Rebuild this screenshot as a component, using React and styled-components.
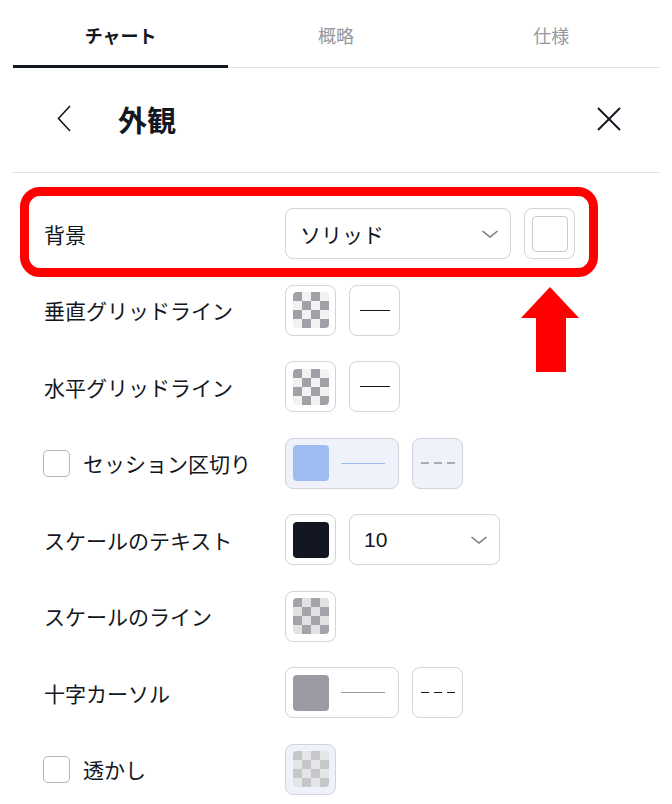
import React from "react";
import styled, { createGlobalStyle, css } from "styled-components";

const GlobalStyle = createGlobalStyle`
  html, body { margin: 0; padding: 0; background: #ffffff; }
  body {
    font-family: "Liberation Sans", "Noto Sans CJK JP", sans-serif;
    color: #131722;
  }
  * { box-sizing: border-box; }
`;

const Page = styled.div`
  position: relative;
  width: 672px;
  height: 804px;
  padding: 0 13px;
  overflow: hidden;
`;

const TabBar = styled.div`
  display: grid;
  grid-template-columns: repeat(3, 1fr);
  height: 68px;
  border-bottom: 1px solid #e0e3eb;
`;

const Tab = styled.div`
  display: flex;
  align-items: center;
  justify-content: center;
  height: 68px;
  margin-bottom: -1px;
  padding-top: 5px;
  font-size: 18px;
  font-weight: ${(p) => (p.$active ? 600 : 400)};
  color: ${(p) => (p.$active ? "#131722" : "#9598a1")};
  border-bottom: 3px solid ${(p) => (p.$active ? "#131722" : "transparent")};
`;

const Header = styled.div`
  display: flex;
  align-items: center;
  height: 105px;
  padding: 0 38px 3px 44px;
  border-bottom: 1px solid #e0e3eb;
`;

const Title = styled.h1`
  margin: 0 0 0 47px;
  flex: 1;
  font-size: 29px;
  font-weight: 700;
  color: #131722;
`;

const IconButton = styled.div`
  display: flex;
  align-items: center;
  justify-content: center;
  color: #131722;
`;

const Body = styled.div`
  display: flex;
  flex-direction: column;
  gap: 25.5px;
  padding-top: 35px;
`;

const Row = styled.div`
  display: grid;
  grid-template-columns: 272px 1fr;
  align-items: center;
  height: 51px;
`;

const Label = styled.div`
  display: flex;
  align-items: center;
  gap: 13px;
  padding-left: 31px;
  font-size: 21px;
  color: #131722;
  white-space: nowrap;
`;

const Checkbox = styled.span`
  width: 27px;
  height: 27px;
  border: 1.5px solid #b2b5be;
  border-radius: 5px;
  background: #fff;
  margin-left: -1px;
`;

const Controls = styled.div`
  display: flex;
  align-items: center;
  gap: 13px;
`;

const Box = styled.div`
  display: flex;
  align-items: center;
  justify-content: ${(p) => (p.$wide ? "flex-start" : "center")};
  gap: 12px;
  width: ${(p) => p.$w || 51}px;
  height: 51px;
  padding: ${(p) => (p.$wide ? "0 13px 0 7px" : "0")};
  border: 1.5px solid #d1d4dc;
  border-radius: 8px;
  background: ${(p) => (p.$disabled ? "#eff2fa" : "#ffffff")};
`;

const patterns = {
  dark: ["#a0a1a6", "#f2f2f3"],
  mid: ["#a3a4a9", "#e0e1e3"],
  faint: ["#c6c7cb", "#e4e5e8"],
};

const Swatch = styled.span`
  flex: none;
  width: 36px;
  height: 36px;
  border-radius: 4px;
  ${(p) =>
    p.$pattern
      ? css`
          background-image: conic-gradient(
            ${patterns[p.$pattern][1]} 25%,
            ${patterns[p.$pattern][0]} 0 50%,
            ${patterns[p.$pattern][1]} 0 75%,
            ${patterns[p.$pattern][0]} 0
          );
          background-size: 18px 18px;
        `
      : css`
          background: ${p.$color};
        `}
  ${(p) =>
    p.$outlined &&
    css`
      background: #ffffff;
      border: 1.5px solid #c9ccd4;
    `}
`;

const Line = styled.span`
  display: block;
  width: ${(p) => p.$w || 30}px;
  height: 0;
  border-top: ${(p) => p.$t || 1.5}px solid ${(p) => p.$color || "#131722"};
`;

const Dashes = styled.span`
  display: flex;
  gap: 5px;
  & > span {
    width: 8px;
    height: 1.5px;
    background: ${(p) => p.$color};
  }
`;

const Select = styled.div`
  display: flex;
  align-items: center;
  justify-content: space-between;
  width: ${(p) => p.$w}px;
  height: 51px;
  padding: 0 11px 0 14px;
  border: 1.5px solid #d1d4dc;
  border-radius: 8px;
  font-size: 21px;
  color: #131722;
`;

const Highlight = styled.div`
  position: absolute;
  left: 20px;
  top: 187px;
  width: 578px;
  height: 90px;
  border: 9px solid #ff0000;
  border-radius: 20px;
  pointer-events: none;
`;

const Arrow = styled.svg`
  position: absolute;
  left: 521px;
  top: 287px;
`;

const Chevron = () => (
  <svg width="18" height="8" viewBox="0 0 18 8">
    <polyline points="1.5,1 9,7 16.5,1" fill="none" stroke="#787b86" strokeWidth="1.6" />
  </svg>
);

const DashBox = ({ disabled, color }) => (
  <Box $disabled={disabled}>
    <Dashes $color={color}>
      <span />
      <span />
      <span />
    </Dashes>
  </Box>
);

export default function App() {
  return (
    <>
      <GlobalStyle />
      <Page>
        <TabBar>
          <Tab $active>チャート</Tab>
          <Tab>概略</Tab>
          <Tab>仕様</Tab>
        </TabBar>

        <Header>
          <IconButton>
            <svg width="14" height="27" viewBox="0 0 14 27">
              <polyline points="13,1 1.5,13.5 13,26" fill="none" stroke="#131722" strokeWidth="1.6" />
            </svg>
          </IconButton>
          <Title>外観</Title>
          <IconButton>
            <svg width="24" height="24" viewBox="0 0 24 24">
              <line x1="1" y1="1" x2="23" y2="23" stroke="#131722" strokeWidth="2" />
              <line x1="23" y1="1" x2="1" y2="23" stroke="#131722" strokeWidth="2" />
            </svg>
          </IconButton>
        </Header>

        <Body>
          <Row>
            <Label>背景</Label>
            <Controls>
              <Select $w={226}>
                <span>ソリッド</span>
                <Chevron />
              </Select>
              <Box>
                <Swatch $outlined />
              </Box>
            </Controls>
          </Row>

          <Row>
            <Label>垂直グリッドライン</Label>
            <Controls>
              <Box>
                <Swatch $pattern="dark" />
              </Box>
              <Box>
                <Line />
              </Box>
            </Controls>
          </Row>

          <Row>
            <Label>水平グリッドライン</Label>
            <Controls>
              <Box>
                <Swatch $pattern="dark" />
              </Box>
              <Box>
                <Line />
              </Box>
            </Controls>
          </Row>

          <Row>
            <Label>
              <Checkbox />
              セッション区切り
            </Label>
            <Controls>
              <Box $wide $w={114} $disabled>
                <Swatch $color="#9dbdf0" />
                <Line $w={45} $color="#9dbdf0" />
              </Box>
              <DashBox disabled color="#a9abb2" />
            </Controls>
          </Row>

          <Row>
            <Label>スケールのテキスト</Label>
            <Controls>
              <Box>
                <Swatch $color="#131722" />
              </Box>
              <Select $w={151}>
                <span>10</span>
                <Chevron />
              </Select>
            </Controls>
          </Row>

          <Row>
            <Label>スケールのライン</Label>
            <Controls>
              <Box>
                <Swatch $pattern="mid" />
              </Box>
            </Controls>
          </Row>

          <Row>
            <Label>十字カーソル</Label>
            <Controls>
              <Box $wide $w={114}>
                <Swatch $color="#9b9ca3" />
                <Line $w={45} $color="#9b9ca3" />
              </Box>
              <DashBox color="#131722" />
            </Controls>
          </Row>

          <Row>
            <Label>
              <Checkbox />
              透かし
            </Label>
            <Controls>
              <Box $disabled>
                <Swatch $pattern="faint" />
              </Box>
            </Controls>
          </Row>
        </Body>

        <Highlight />
        <Arrow width="58" height="85" viewBox="0 0 58 85">
          <polygon points="29,0 58,31 45,31 45,85 15,85 15,31 0,31" fill="#ff0000" />
        </Arrow>
      </Page>
    </>
  );
}
